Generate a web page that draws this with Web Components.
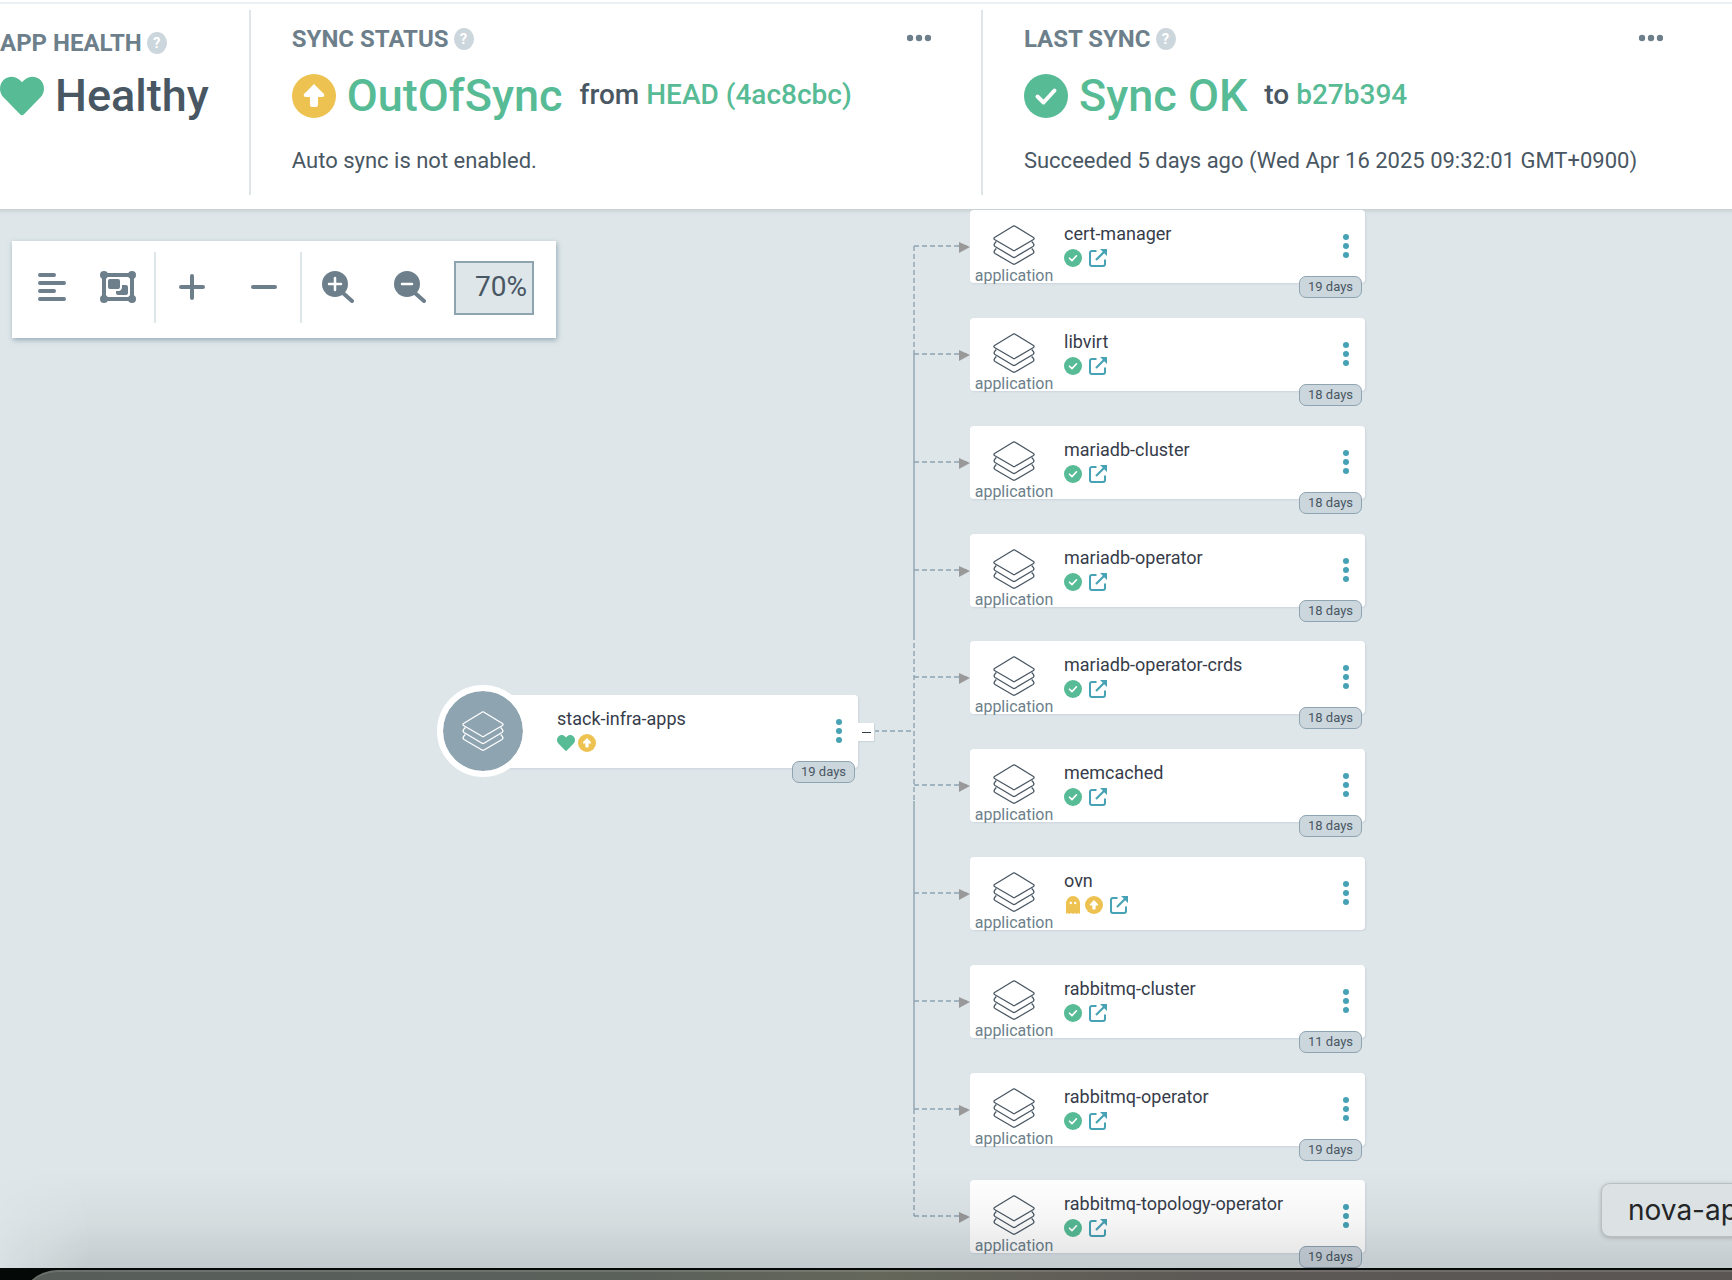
<!DOCTYPE html>
<html lang="en">
<head>
<meta charset="utf-8">
<title>stack-infra-apps</title>
<style>
  html, body {
    margin: 0;
    height: 100%;
  }

  body {
    font-family: Roboto, "Open Sans", sans-serif;
    color: #495763;
    background: #fff;
  }
</style>
</head>
<body>
<app-page></app-page>

<script>
const ICONS = {
  heart: ['0 0 512 512', '<path d="M462 62c-55-47-136-38-186 14l-20 20-20-20C186 24 105 15 50 62c-63 54-66 150-10 208l193 199c13 13 33 13 46 0l193-199c56-58 53-154-10-208z"/>'],
  check: ['0 0 44 44', '<circle cx="22" cy="22" r="22"/><path d="M13.5 22.5l6 6 11-12" fill="none" stroke="#fff" stroke-width="4" stroke-linecap="round" stroke-linejoin="round"/>'],
  arrow: ['0 0 44 44', '<circle cx="22" cy="22" r="22"/><path d="M22 10L32 20Q33 23 30 23H26V31Q26 33 24 33H20Q18 33 18 31V23H14Q11 23 12 20Z" fill="#fff"/>'],
  ghost: ['0 0 18 18', '<path d="M2 18V7.5a7 7.5 0 0 1 14 0V18l-1.5-1-1.5 1-2-1-2 1-2-1-2 1-1.5-1z"/><circle cx="6.8" cy="7" r="1.2" fill="#fff"/><circle cx="11.2" cy="7" r="1.2" fill="#fff"/>'],
  external: ['0 0 18 18', '<path d="M7.5 2H3Q1 2 1 4V15Q1 17 3 17H14Q16 17 16 15V10.5" fill="none" stroke="currentColor" stroke-width="2"/><path d="M7 11L15 3" stroke="currentColor" stroke-width="2.2"/><path d="M11 0H18V7L15.7 4.7 13.3 2.3Z"/>'],
  layers: ['0 0 42 40', '<g fill="none" stroke="currentColor" stroke-width="1.3" stroke-linejoin="round"><path d="M20 1.2Q21 .7 22 1.2L40.5 12.5Q41.7 13.5 40.5 14.5L22 25.3Q21 25.8 20 25.3L1.5 14.5Q.3 13.5 1.5 12.5Z"/><path d="M3.3 16.5L1.5 18.7Q.5 20.5 2 21.5L20 32.2Q21 32.8 22 32.2L40 21.5Q41.5 20.5 40.5 18.7L38.7 16.5"/><path d="M3.3 23.5L1.5 25.7Q.5 27.5 2 28.5L20 39Q21 39.5 22 39L40 28.5Q41.5 27.5 40.5 25.7L38.7 23.5"/></g>'],
  dots: ['0 0 24 8', '<circle cx="3" cy="4" r="3.2"/><circle cx="12" cy="4" r="3.2"/><circle cx="21" cy="4" r="3.2"/>'],
  kebab: ['0 0 6 24', '<circle cx="3" cy="3" r="3"/><circle cx="3" cy="12" r="3"/><circle cx="3" cy="21" r="3"/>'],
  align: ['0 0 28 28', '<path d="M2 2H16M2 10H26M2 18H16M2 26H26" stroke="currentColor" stroke-width="4" stroke-linecap="round"/>'],
  group: ['0 0 36 32', '<rect x="4" y="4" width="28" height="24" fill="none" stroke="currentColor" stroke-width="4"/><circle cx="4" cy="4" r="4"/><circle cx="32" cy="4" r="4"/><circle cx="4" cy="28" r="4"/><circle cx="32" cy="28" r="4"/><rect x="8" y="8" width="12" height="10" rx="2"/><path d="M22 14h4q2 0 2 2v6q0 2-2 2h-8q-2 0-2-2v-2h3q3-1 3-4z"/>'],
  plus: ['0 0 26 26', '<path d="M13 2V24M2 13H24" stroke="currentColor" stroke-width="4" stroke-linecap="round"/>'],
  minus: ['0 0 26 26', '<path d="M2 13H24" stroke="currentColor" stroke-width="4" stroke-linecap="round"/>'],
  zoomIn: ['0 0 32 32', '<circle cx="13" cy="13" r="13"/><path d="M21 22L30 30" stroke="currentColor" stroke-width="4" stroke-linecap="round"/><path d="M13 7V19M7 13H19" stroke="#fff" stroke-width="2.5" stroke-linecap="round"/>'],
  zoomOut: ['0 0 32 32', '<circle cx="13" cy="13" r="13"/><path d="M21 22L30 30" stroke="currentColor" stroke-width="4" stroke-linecap="round"/><path d="M8 13H18" stroke="#fff" stroke-width="2.5" stroke-linecap="round"/>']
};

class ArgoIcon extends HTMLElement {
  connectedCallback() {
    const [viewBox, body] = ICONS[this.getAttribute('name')];
    this.attachShadow({ mode: 'open' });
    this.shadowRoot.innerHTML = `
      <style>
        :host { display: block; flex: none; }
        svg { display: block; width: 100%; height: 100%; fill: currentColor; }
      </style>
      <svg viewBox="${viewBox}" aria-hidden="true">${body}</svg>
    `;
  }
}

class StatusPanel extends HTMLElement {
  connectedCallback() {
    this.attachShadow({ mode: 'open' });
    this.shadowRoot.innerHTML = `
      <style>
        :host {
          display: block;
          box-sizing: border-box;
          padding: 13px 50px 20px 41px;
          border-right: 2px solid #dee6e9;
        }

        :host(.wide) { flex: 1; }
        :host(:last-child) { border-right-color: transparent; }
        :host(.first) { padding: 17px 40px 20px 0; }

        .title {
          display: flex;
          align-items: center;
          gap: 5px;
          height: 32px;
          font-size: 24px;
          font-weight: 700;
          color: #6d7f8b;
          white-space: nowrap;
        }

        h2 { margin: 0; font: inherit; }

        button {
          border: 0;
          padding: 0;
          background: none;
          color: inherit;
          cursor: pointer;
        }

        .help {
          width: 20px;
          height: 22px;
          border-radius: 50%;
          background: #ccd6dd;
          color: #fff;
          font: 700 15px/22px Roboto, sans-serif;
        }

        .more { margin-left: auto; padding-bottom: 2px; }
        .more argo-icon { width: 24px; height: 8px; }
        :host(.first) .more { display: none; }

        .status {
          display: flex;
          align-items: center;
          gap: 11px;
          height: 46px;
          margin-top: 18px;
          font-size: 45px;
          font-weight: 500;
          line-height: 46px;
          white-space: nowrap;
        }

        :host(.first) .status { margin-top: 14px; }

        .message {
          margin-top: 28px;
          font-size: 22px;
          line-height: 28px;
          white-space: nowrap;
        }
      </style>
      <div class="title">
        <h2>${this.getAttribute('heading')}</h2>
        <button class="help" type="button">?</button>
        <button class="more" type="button" aria-label="More"><argo-icon name="dots"></argo-icon></button>
      </div>
      <div class="status"><slot></slot></div>
      <div class="message"><slot name="message"></slot></div>
    `;
  }
}

class CanvasToolbar extends HTMLElement {
  connectedCallback() {
    this.attachShadow({ mode: 'open' });
    this.shadowRoot.innerHTML = `
      <style>
        :host {
          display: flex;
          width: max-content;
          padding: 11px 22px 15px 7px;
          background: #fff;
          color: #6d7f8b;
          box-shadow: 1px 2px 5px rgba(100, 130, 150, .6);
        }

        .section {
          display: flex;
          align-items: center;
          height: 71px;
          border-right: 2px solid #dee6e9;
        }

        .section.layout { padding-right: 3px; }
        .section:last-child { border-right: 0; }

        button {
          display: flex;
          align-items: center;
          justify-content: center;
          box-sizing: border-box;
          width: 72px;
          height: 54px;
          padding: 0 0 2px;
          border: 0;
          background: none;
          color: inherit;
          cursor: pointer;
        }

        .layout button { width: 66px; }
        argo-icon { width: 26px; height: 26px; }
        argo-icon[name="align"] { width: 28px; height: 28px; }
        argo-icon[name="group"] { width: 36px; height: 32px; }
        argo-icon[name^="zoom"] { width: 32px; height: 32px; }

        input {
          box-sizing: border-box;
          width: 80px;
          height: 54px;
          margin: 0 0 0 8px;
          padding: 0 5px 2px 0;
          border: 2px solid #8fa4b1;
          border-radius: 0;
          background: #dee6e9;
          color: #495763;
          font: 400 28px Roboto, sans-serif;
          text-align: right;
        }
      </style>
      <div class="section layout">
        <button type="button" aria-label="Align"><argo-icon name="align"></argo-icon></button>
        <button type="button" aria-label="Group nodes"><argo-icon name="group"></argo-icon></button>
      </div>
      <div class="section">
        <button type="button" aria-label="Expand all"><argo-icon name="plus"></argo-icon></button>
        <button type="button" aria-label="Collapse all"><argo-icon name="minus"></argo-icon></button>
      </div>
      <div class="section">
        <button type="button" aria-label="Zoom in"><argo-icon name="zoomIn"></argo-icon></button>
        <button type="button" aria-label="Zoom out"><argo-icon name="zoomOut"></argo-icon></button>
        <input type="text" value="70%" aria-label="Zoom">
      </div>
    `;
  }
}

class ResourceNode extends HTMLElement {
  connectedCallback() {
    const name = this.getAttribute('name');
    const age = this.getAttribute('age');
    const root = this.hasAttribute('root');
    const icons = this.getAttribute('icons').split(' ').map(icon => icon === 'external'
      ? '<a href="#" aria-label="Open application"><argo-icon name="external"></argo-icon></a>'
      : `<argo-icon name="${icon}"></argo-icon>`).join('');

    this.attachShadow({ mode: 'open' });
    this.shadowRoot.innerHTML = `
      <style>
        :host {
          position: absolute;
          display: flex;
          box-sizing: border-box;
          width: 395px;
          height: 73px;
          padding-right: 16px;
          border-radius: 4px;
          background: #fff;
          box-shadow: 1px 1px 2px #ccd6dd;
        }

        .kind {
          display: flex;
          flex-direction: column;
          align-items: center;
          width: 88px;
          padding-top: 15px;
          font-size: 16px;
          line-height: 18px;
          color: #6d7f8b;
        }

        .kind argo-icon {
          width: 42px;
          height: 40px;
          color: #495763;
        }

        .kind span { margin-top: 2px; }

        .circle {
          position: absolute;
          left: -26px;
          top: -10px;
          display: flex;
          align-items: center;
          justify-content: center;
          width: 80px;
          height: 80px;
          border: 6px solid #fff;
          border-radius: 50%;
          background: #8fa4b1;
          background-clip: padding-box;
        }

        .circle argo-icon {
          width: 42px;
          height: 40px;
          color: #fff;
        }

        .body {
          flex: 1;
          padding: 14px 0 0 6px;
        }

        .name {
          font-size: 18px;
          line-height: 20px;
          color: #363c4a;
          white-space: nowrap;
        }

        .icons {
          display: flex;
          gap: 3px;
          margin-top: 5px;
        }

        .icons argo-icon { width: 18px; height: 18px; }
        .icons a { margin-left: 4px; color: #46a2b4; }
        argo-icon[name="heart"], argo-icon[name="check"] { color: #57bb95; }
        argo-icon[name="arrow"], argo-icon[name="ghost"] { color: #edc251; }

        .menu {
          align-self: center;
          padding: 0 0 2px;
          border: 0;
          background: none;
          color: #46a2b4;
          cursor: pointer;
        }

        .menu argo-icon { width: 6px; height: 24px; }

        .age {
          position: absolute;
          right: 3px;
          bottom: -15px;
          box-sizing: border-box;
          width: 63px;
          height: 22px;
          border: 1px solid #8fa4b1;
          border-radius: 7px;
          background: #ccd6dd;
          color: #495763;
          font-size: 13px;
          line-height: 20px;
          text-align: center;
        }

        .collapse {
          position: absolute;
          left: 395px;
          top: 28px;
          width: 16px;
          height: 18px;
          padding: 0;
          border: 0;
          background: #fff;
          box-shadow: 1px 1px 1px #ccd6dd;
          cursor: pointer;
        }

        .collapse::before {
          content: "";
          display: block;
          width: 9px;
          height: 1px;
          margin: 0 auto;
          background: #363c4a;
        }
      </style>
      <div class="kind">
        ${root ? '<div class="circle"><argo-icon name="layers"></argo-icon></div>'
               : '<argo-icon name="layers"></argo-icon><span>application</span>'}
      </div>
      <div class="body">
        <div class="name">${name}</div>
        <div class="icons">${icons}</div>
      </div>
      <button class="menu" type="button" aria-label="Actions"><argo-icon name="kebab"></argo-icon></button>
      ${age ? `<div class="age">${age}</div>` : ''}
      ${root ? '<button class="collapse" type="button" aria-label="Collapse"></button>' : ''}
    `;
  }
}

const CHILDREN = [
  { name: 'cert-manager', top: 1, age: '19 days' },
  { name: 'libvirt', top: 109, age: '18 days' },
  { name: 'mariadb-cluster', top: 217, age: '18 days' },
  { name: 'mariadb-operator', top: 325, age: '18 days' },
  { name: 'mariadb-operator-crds', top: 432, age: '18 days' },
  { name: 'memcached', top: 540, age: '18 days' },
  { name: 'ovn', top: 648, age: '', icons: 'ghost arrow external' },
  { name: 'rabbitmq-cluster', top: 756, age: '11 days' },
  { name: 'rabbitmq-operator', top: 864, age: '19 days' },
  { name: 'rabbitmq-topology-operator', top: 971, age: '19 days' }
];

class ResourceTree extends HTMLElement {
  connectedCallback() {
    const branches = CHILDREN.map(({ top }) => {
      const y = top + 36;
      return `<path d="M914 ${y}H970" stroke-dasharray="5 3"/>
        <path d="M959 ${y - 4}L970 ${y + 1}L959 ${y + 7}Z" fill="#999" stroke="none"/>`;
    }).join('');

    this.attachShadow({ mode: 'open' });
    this.shadowRoot.innerHTML = `
      <style>
        :host {
          position: relative;
          display: block;
          flex: 1;
          min-height: 0;
          padding: 32px 12px;
          box-sizing: border-box;
          overflow: hidden;
          background: linear-gradient(#c8d0d3, #dee6e9 5px);
        }

        .edges {
          position: absolute;
          left: 0;
          top: 0;
          width: 100%;
          height: 100%;
          fill: none;
          stroke: #8fa4b1;
          stroke-width: 1.4;
        }

        .shade {
          position: absolute;
          left: 0;
          right: 0;
          bottom: 0;
          height: 96px;
          background: linear-gradient(rgba(0, 0, 0, 0), rgba(10, 10, 20, .04) 50%, rgba(10, 10, 20, .12));
          -webkit-mask-image: linear-gradient(to right, rgba(0, 0, 0, .2), #000 90px);
          mask-image: linear-gradient(to right, rgba(0, 0, 0, .2), #000 90px);
          pointer-events: none;
        }

        .tooltip {
          position: absolute;
          left: 1602px;
          bottom: 32px;
          box-sizing: border-box;
          height: 52px;
          padding: 0 26px;
          border-radius: 8px;
          background: #dce1e3;
          box-shadow: 0 0 0 1px #b9bfc2, 0 1px 5px rgba(0, 0, 0, .3);
          color: #232527;
          font: 400 28px/52px Inter, sans-serif;
          white-space: nowrap;
        }
      </style>
      <canvas-toolbar></canvas-toolbar>
      <svg class="edges" aria-hidden="true">
        <path d="M874 522H914M914 37V145M914 426V592M914 900V1007" stroke-dasharray="5 3"/>
        <path d="M914 145V426M914 592V900"/>
        ${branches}
      </svg>
      <resource-node root name="stack-infra-apps" icons="heart arrow" age="19 days" style="left: 463px; top: 486px"></resource-node>
      ${CHILDREN.map(node => `<resource-node name="${node.name}" icons="${node.icons || 'check external'}" age="${node.age}" style="left: 970px; top: ${node.top}px"></resource-node>`).join('')}
      <div class="shade"></div>
      <div class="tooltip">nova-ap</div>
    `;
  }
}

class DesktopDock extends HTMLElement {
  connectedCallback() {
    this.attachShadow({ mode: 'open' });
    this.shadowRoot.innerHTML = `
      <style>
        :host {
          display: block;
          flex: none;
          height: 12px;
          overflow: hidden;
          background: #040806;
        }

        div {
          height: 60px;
          margin: 2px 0 0 18px;
          border-top: 2px solid rgba(255, 255, 255, .12);
          border-radius: 40px 0 0 0;
          background: linear-gradient(to right, #575d58, #5a605a 35%, #64675a 50%, #615f58 60%, #5c5855 70%, #5b5653);
        }
      </style>
      <div></div>
    `;
  }
}

class AppPage extends HTMLElement {
  connectedCallback() {
    this.attachShadow({ mode: 'open' });
    this.shadowRoot.innerHTML = `
      <style>
        :host {
          display: flex;
          flex-direction: column;
          height: 100vh;
          overflow: hidden;
        }

        header {
          display: flex;
          flex: none;
          margin-top: 2px;
          padding: 6px 17px 14px 0;
          border-top: 2px solid #ebf1f5;
        }

        .health, .warn { width: 44px; height: 44px; }
        .health { color: #57bb95; }
        .warn { color: #edc251; }
        .ok, a { color: #57bb95; }
        a { text-decoration: none; }
        .revision { margin-left: 6px; padding-bottom: 2px; font-size: 28px; }
      </style>
      <header>
        <status-panel class="first" heading="APP HEALTH">
          <argo-icon name="heart" class="health"></argo-icon>
          <span>Healthy</span>
        </status-panel>
        <status-panel class="wide" heading="SYNC STATUS">
          <argo-icon name="arrow" class="warn"></argo-icon>
          <span class="ok">OutOfSync</span>
          <span class="revision">from <a href="#">HEAD (4ac8cbc)</a></span>
          <span slot="message">Auto sync is not enabled.</span>
        </status-panel>
        <status-panel class="wide" heading="LAST SYNC">
          <argo-icon name="check" class="health"></argo-icon>
          <span class="ok">Sync OK</span>
          <span class="revision">to <a href="#">b27b394</a></span>
          <span slot="message">Succeeded 5 days ago (Wed Apr 16 2025 09:32:01 GMT+0900)</span>
        </status-panel>
      </header>
      <resource-tree></resource-tree>
      <desktop-dock></desktop-dock>
    `;
  }
}

customElements.define('argo-icon', ArgoIcon);
customElements.define('status-panel', StatusPanel);
customElements.define('canvas-toolbar', CanvasToolbar);
customElements.define('resource-node', ResourceNode);
customElements.define('resource-tree', ResourceTree);
customElements.define('desktop-dock', DesktopDock);
customElements.define('app-page', AppPage);
</script>
</body>
</html>
